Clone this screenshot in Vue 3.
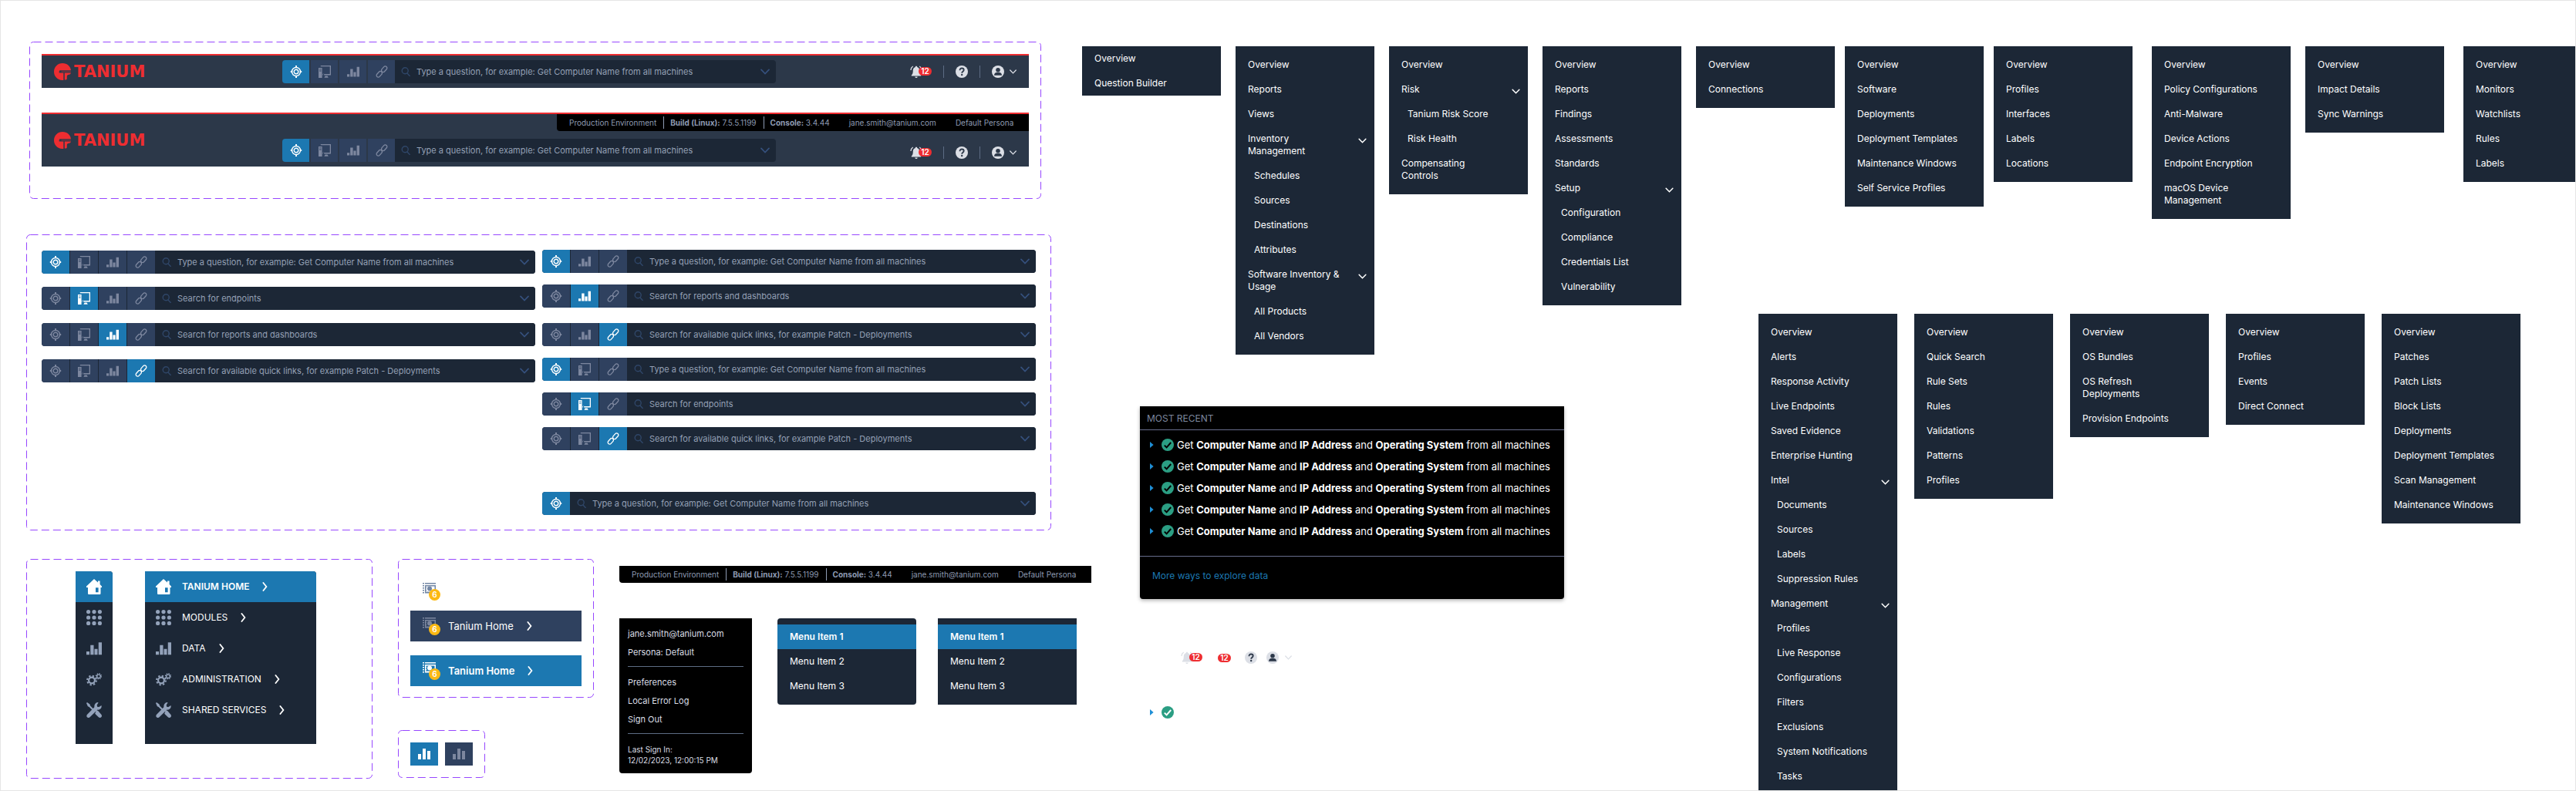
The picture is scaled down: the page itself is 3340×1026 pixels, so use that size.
<script setup>
const prompts = {
  question: 'Type a question, for example: Get Computer Name from all machines',
  endpoint: 'Search for endpoints',
  reports: 'Search for reports and dashboards',
  link: 'Search for available quick links, for example Patch - Deployments'
}
const modeNames = { question: 'Ask a question', endpoint: 'Endpoints', reports: 'Reports', link: 'Quick links' }

const all = ['question', 'endpoint', 'reports', 'link']
const noEndpoint = ['question', 'reports', 'link']
const noReports = ['question', 'endpoint', 'link']

const headers = [
  { id: 'compact', env: false },
  { id: 'tall', env: true }
]
const fullBars = all.map((active) => ({ modes: all, active }))
const partialBars = [
  { modes: noEndpoint, active: 'question', gap: '' },
  { modes: noEndpoint, active: 'reports', gap: 'gap-s' },
  { modes: noEndpoint, active: 'link', gap: 'gap-m' },
  { modes: noReports, active: 'question', gap: 'gap-s' },
  { modes: noReports, active: 'endpoint', gap: 'gap-s' },
  { modes: noReports, active: 'link', gap: 'gap-s' },
  { modes: ['question'], active: 'question', gap: 'gap-l' }
]

const nav = [
  { icon: 'home', label: 'TANIUM HOME' },
  { icon: 'grid', label: 'MODULES' },
  { icon: 'reports', label: 'DATA' },
  { icon: 'gears', label: 'ADMINISTRATION' },
  { icon: 'tools', label: 'SHARED SERVICES' }
]

// Leading ">" marks a nested entry, trailing "v" marks an expandable group.
const item = (s) => ({
  label: s.replace(/^>/, '').replace(/ v$/, ''),
  sub: s.startsWith('>'),
  group: s.endsWith(' v')
})
const menu = (gap, ...labels) => ({ gap, items: labels.map(item) })

const menusA = [
  menu('flush', 'Overview', 'Question Builder'),
  menu('', 'Overview', 'Reports', 'Views', 'Inventory\nManagement v', '>Schedules', '>Sources', '>Destinations', '>Attributes', 'Software Inventory &\nUsage v', '>All Products', '>All Vendors'),
  menu('', 'Overview', 'Risk v', '>Tanium Risk Score', '>Risk Health', 'Compensating\nControls'),
  menu('', 'Overview', 'Reports', 'Findings', 'Assessments', 'Standards', 'Setup v', '>Configuration', '>Compliance', '>Credentials List', '>Vulnerability')
]
const menusB = [
  menu('', 'Overview', 'Connections'),
  menu('near', 'Overview', 'Software', 'Deployments', 'Deployment Templates', 'Maintenance Windows', 'Self Service Profiles'),
  menu('near', 'Overview', 'Profiles', 'Interfaces', 'Labels', 'Locations'),
  menu('far', 'Overview', 'Policy Configurations', 'Anti-Malware', 'Device Actions', 'Endpoint Encryption', 'macOS Device\nManagement'),
  menu('', 'Overview', 'Impact Details', 'Sync Warnings'),
  menu('far', 'Overview', 'Monitors', 'Watchlists', 'Rules', 'Labels')
]
const menusC = [
  menu('full', 'Overview', 'Alerts', 'Response Activity', 'Live Endpoints', 'Saved Evidence', 'Enterprise Hunting', 'Intel v', '>Documents', '>Sources', '>Labels', '>Suppression Rules', 'Management v', '>Profiles', '>Live Response', '>Configurations', '>Filters', '>Exclusions', '>System Notifications', '>Tasks'),
  menu('', 'Overview', 'Quick Search', 'Rule Sets', 'Rules', 'Validations', 'Patterns', 'Profiles'),
  menu('', 'Overview', 'OS Bundles', 'OS Refresh\nDeployments', 'Provision Endpoints'),
  menu('', 'Overview', 'Profiles', 'Events', 'Direct Connect'),
  menu('', 'Overview', 'Patches', 'Patch Lists', 'Block Lists', 'Deployments', 'Deployment Templates', 'Scan Management', 'Maintenance Windows')
]
</script>

<template>
  <svg class="defs" aria-hidden="true">
    <symbol id="i-question" viewBox="0 0 16 16">
      <g fill="none" stroke="currentColor">
        <circle cx="8" cy="8" r="5.5" stroke-width="1.4" />
        <circle cx="8" cy="8" r="2.8" stroke-width="1.4" />
        <path d="M8 0v3M8 13v3M0.8 8h2.4M12.800 8h2.4" stroke-width="2" />
      </g>
    </symbol>
    <symbol id="i-endpoint" viewBox="0 0 16 16">
      <path fill="currentColor" fill-rule="evenodd" d="M0 3h4.6v13H0zM1 4.4v.9h2.6v-.9zM1 6.6v.9h2.6v-.9zM2.8 0H16v12.6H6V11h8.7V1.3H2.8zM8.6 13.5h3l1.2 2.2H7.4zM5.4 10.8h1.8v1.8H5.4z" />
    </symbol>
    <symbol id="i-reports" viewBox="0 0 16 16">
      <path fill="currentColor" d="M0 11.2h3.2V14.5H0zM4.2 4.5h3.4v10H4.2zM8.4 8.6h3.2v5.9H8.4zM12.6 1.8H16v12.7h-3.4z" />
    </symbol>
    <symbol id="i-link" viewBox="0 0 16 16">
      <g fill="none" stroke="currentColor" stroke-width="1.3" stroke-linecap="round">
        <rect x="-2.3" y="-4.3" width="4.6" height="8.6" rx="2.3" transform="translate(11.2 4.7) rotate(42)" />
        <rect x="-2.3" y="-4.3" width="4.6" height="8.6" rx="2.3" transform="translate(4.8 11.3) rotate(42)" />
      </g>
    </symbol>
    <symbol id="i-search" viewBox="0 0 12 12">
      <g fill="none" stroke="currentColor" stroke-width="1.4" stroke-linecap="round">
        <circle cx="5.2" cy="4.8" r="4" /><path d="M8 8l3.2 3.4" />
      </g>
    </symbol>
    <symbol id="i-down" viewBox="0 0 12 8">
      <path d="M1 1.4l5 5.2 5-5.2" fill="none" stroke="currentColor" stroke-width="1.7" stroke-linecap="round" />
    </symbol>
    <symbol id="i-right" viewBox="0 0 8 12">
      <path d="M1.4 1l4 5-4 5" fill="none" stroke="currentColor" stroke-width="1.8" stroke-linecap="round" />
    </symbol>
    <symbol id="i-bell" viewBox="0 0 16 16">
      <path fill="currentColor" d="M8 .8c.8 0 1.2.5 1.2 1.1 2.2.6 3 2.5 3 4.7 0 3.2.6 4.8 2 5.9v1.1H1.8v-1.1c1.4-1.1 2-2.7 2-5.9 0-2.2.8-4.100 3-4.700C6.800 1.300 7.200.8 8 .8zM6.300 14.400h3.400c-.2 1-.8 1.600-1.700 1.600s-1.500-.6-1.700-1.600z" />
      <path fill="none" stroke="currentColor" stroke-width="1.2" d="M3.7 1C1.9 2.2 1 3.8.9 6M12.3 1c1.8 1.2 2.7 2.8 2.8 5" />
    </symbol>
    <symbol id="i-help" viewBox="0 0 16 16">
      <circle cx="8" cy="8" r="8" fill="#dcdfe6" />
      <path d="M5.500 6.200c0-1.700 1.100-2.700 2.600-2.700s2.600 1 2.600 2.300c0 2-2.500 1.900-2.500 3.900" fill="none" stroke="#2c3849" stroke-width="1.8" />
      <circle cx="8.2" cy="12" r="1.2" fill="#2c3849" />
    </symbol>
    <symbol id="i-user" viewBox="0 0 16 16">
      <circle cx="8" cy="8" r="8" fill="#dcdfe6" />
      <circle cx="8" cy="5.8" r="2.8" fill="#2c3849" />
      <path d="M3 12.800c0-2.400 1.400-3.600 3.200-3.800h3.600c1.800.2 3.200 1.400 3.200 3.800z" fill="#2c3849" />
    </symbol>
    <symbol id="i-home" viewBox="0 0 20 20">
      <path fill="currentColor" fill-rule="evenodd" d="M10 0l5 4.600V2.400h2.600V7L20 9.400V11h-1.500v7.500c0 1-.5 1.500-1.500 1.500H3.500c-1 0-1.500-.5-1.500-1.500V11H0V9.400zM12 11.300v6h3.600v-6z" />
    </symbol>
    <symbol id="i-grid" viewBox="0 0 20 20">
      <g fill="currentColor">
        <circle cx="2.6" cy="2.6" r="2.6" /><circle cx="10" cy="2.6" r="2.6" /><circle cx="17.4" cy="2.6" r="2.6" />
        <circle cx="2.6" cy="10" r="2.6" /><circle cx="10" cy="10" r="2.6" /><circle cx="17.4" cy="10" r="2.6" />
        <circle cx="2.6" cy="17.4" r="2.6" /><circle cx="10" cy="17.4" r="2.6" /><circle cx="17.4" cy="17.4" r="2.6" />
      </g>
    </symbol>
    <symbol id="i-gears" viewBox="0 0 20 20">
      <g fill="none" stroke="currentColor">
        <circle cx="7" cy="11.5" r="3.9" stroke-width="2.2" />
        <circle cx="7" cy="11.5" r="5.9" stroke-width="2" stroke-dasharray="2.3 2.34" />
        <circle cx="16" cy="6.2" r="2.3" stroke-width="1.4" />
        <circle cx="16" cy="6.2" r="3.5" stroke-width="1.3" stroke-dasharray="1.37 1.38" />
      </g>
    </symbol>
    <symbol id="i-tools" viewBox="0 0 20 20">
      <path fill="currentColor" d="M14.600 0l1 .2-1.900 3.200.4 2.300 2.300.4L19.500 4c.9 3.300-1.700 6.200-5 5.600L4.500 19.300c-1 1-2.700.9-3.500 0-.9-.9-.9-2.500.1-3.500l9.300-9.500C9.900 3 11.800.2 14.600 0zM0 .9L1 0l3.500 2.400.6 2.100 4 4-1.500 1.500-4-4L1.900 5.300zM12.800 10.800c.8-.4 1.900-.3 2.600.4l3.900 4.600c.9 1 .9 2.600 0 3.500s-2.500.9-3.500 0l-4.600-4.600z" />
    </symbol>
    <symbol id="i-module" viewBox="0 0 17 16">
      <path fill="currentColor" fill-rule="evenodd" d="M3 0h14v1.5H3zM0 0h2v1.5H0zM0 3h2v1.5H0zM0 6h2v1.5H0zM0 9h2v1.5H0zM0 12h2v1.5H0zM3 3h14v10.5H3zM4.500 4.500v7.500h11V4.500z" />
      <circle cx="9" cy="7.5" r="3" fill="currentColor" />
      <path fill="currentColor" d="M3 6h2v1H3zM3 9h2v1H3zM5 11.500h8V13H5z" />
    </symbol>
    <symbol id="i-chart" viewBox="0 0 16 14">
      <path fill="currentColor" d="M0 7h4v7H0zM6 0h4v14H6zM12 3h4v11h-4z" />
    </symbol>
    <symbol id="i-play" viewBox="0 0 5 8"><path d="M0 0l4.600 4L0 8z" fill="#1f8fd6" /></symbol>
    <symbol id="i-check" viewBox="0 0 16 16">
      <circle cx="8" cy="8" r="8" fill="#2b9e83" />
      <path d="M3.800 8.600l2.800 2.800 5.600-6.400" fill="none" stroke="currentColor" stroke-width="2" />
    </symbol>
    <symbol id="i-logo" viewBox="0 0 22 22">
      <path fill="#ee2d31" d="M11 0C17.200 0 21.600 4.300 22 9.200H8.200c-1 0-1.500.6-1.500 1.500v1.900h5.600V22C5 22.400 0 17.300 0 11 0 4.900 4.900 0 11 0zM13.800 12.600H22c-.6 1.800-1.200 2.200-2.400 2.200-2 0-2.800 1-2.800 2.600v3.200l-1 .8h-2z" />
      <path fill="#ee2d31" d="M9.500 10.500H22v.9H9.500z" opacity=".6" />
    </symbol>
  </svg>

  <main class="sheet">
    <div class="west">
      <section class="frame headers" aria-label="Headers">
        <svg class="dash" aria-hidden="true"><rect rx="5" /></svg>
        <header v-for="h in headers" :key="h.id" class="topbar" :class="h.id">
          <a class="logo" href="#" aria-label="Tanium">
            <svg width="22" height="22"><use href="#i-logo" /></svg><span>TANIUM</span>
          </a>
          <div v-if="h.env" class="env">
            <span class="env-cell">Production Environment</span>
            <span class="env-cell ruled"><b>Build (Linux):</b> 7.5.5.1199</span>
            <span class="env-cell ruled"><b>Console:</b> 3.4.44</span>
            <span class="env-cell mail">jane.smith@tanium.com</span>
            <span class="env-cell">Default Persona</span>
          </div>
          <form class="search split" @submit.prevent>
            <button v-for="m in all" :key="m" type="button" class="tab" :class="{ on: m === 'question' }" :aria-label="modeNames[m]">
              <svg width="16" height="16"><use :href="`#i-${m}`" /></svg>
            </button>
            <div class="field">
              <svg class="glass" width="12" height="12"><use href="#i-search" /></svg>
              <input type="text" :placeholder="prompts.question" aria-label="Question" />
              <button type="button" class="open" aria-label="Show history"><svg width="12" height="8"><use href="#i-down" /></svg></button>
            </div>
          </form>
          <div class="tools">
            <button type="button" class="bell" aria-label="Notifications">
              <svg width="16" height="16"><use href="#i-bell" /></svg><span class="count">12</span>
            </button>
            <i class="rule"></i>
            <button type="button" aria-label="Help"><svg width="16" height="16"><use href="#i-help" /></svg></button>
            <i class="rule"></i>
            <button type="button" class="account" aria-label="Account">
              <svg width="16" height="16"><use href="#i-user" /></svg><svg width="9" height="6"><use href="#i-down" /></svg>
            </button>
          </div>
        </header>
      </section>

      <section class="frame bars" aria-label="Search bars">
        <svg class="dash" aria-hidden="true"><rect rx="5" /></svg>
        <div v-for="(col, c) in [fullBars, partialBars]" :key="c" class="bar-col" :class="{ even: c === 0 }">
          <form v-for="(bar, i) in col" :key="i" class="search" :class="bar.gap" @submit.prevent>
            <button v-for="m in bar.modes" :key="m" type="button" class="tab" :class="{ on: m === bar.active }" :aria-label="modeNames[m]">
              <svg width="16" height="16"><use :href="`#i-${m}`" /></svg>
            </button>
            <div class="field">
              <svg class="glass" width="12" height="12"><use href="#i-search" /></svg>
              <input type="text" :placeholder="prompts[bar.active]" :aria-label="modeNames[bar.active]" />
              <button type="button" class="open" aria-label="Show history"><svg width="12" height="8"><use href="#i-down" /></svg></button>
            </div>
          </form>
        </div>
      </section>

      <div class="lower">
        <section class="frame navs" aria-label="Navigation">
          <svg class="dash" aria-hidden="true"><rect rx="5" /></svg>
          <nav class="side slim">
            <a v-for="(n, i) in nav" :key="n.icon" href="#" :class="{ on: i === 0 }" :aria-label="n.label">
              <svg width="20" height="20"><use :href="`#i-${n.icon}`" /></svg>
            </a>
          </nav>
          <nav class="side wide">
            <a v-for="(n, i) in nav" :key="n.icon" href="#" :class="{ on: i === 0 }">
              <svg width="20" height="20"><use :href="`#i-${n.icon}`" /></svg>
              <span>{{ n.label }}</span>
              <svg class="go" width="8" height="12"><use href="#i-right" /></svg>
            </a>
          </nav>
        </section>

        <div class="stack">
          <section class="frame rows" aria-label="Navigation items">
            <svg class="dash" aria-hidden="true"><rect rx="5" /></svg>
            <div class="row bare">
              <span class="mod"><svg width="17" height="16"><use href="#i-module" /></svg><span class="six">6</span></span>
            </div>
            <a v-for="s in ['rest', 'on']" :key="s" class="row" :class="s" href="#">
              <span class="mod"><svg width="17" height="16"><use href="#i-module" /></svg><span class="six">6</span></span>
              <span>Tanium Home</span>
              <svg width="8" height="12"><use href="#i-right" /></svg>
            </a>
          </section>
          <section class="frame toggles" aria-label="Chart buttons">
            <svg class="dash" aria-hidden="true"><rect rx="5" /></svg>
            <button type="button" class="tab on" aria-label="Chart, selected"><svg width="16" height="14"><use href="#i-chart" /></svg></button>
            <button type="button" class="tab" aria-label="Chart"><svg width="16" height="14"><use href="#i-chart" /></svg></button>
          </section>
        </div>

        <div class="extras">
          <div class="env">
            <span class="env-cell">Production Environment</span>
            <span class="env-cell ruled"><b>Build (Linux):</b> 7.5.5.1199</span>
            <span class="env-cell ruled"><b>Console:</b> 3.4.44</span>
            <span class="env-cell mail">jane.smith@tanium.com</span>
            <span class="env-cell">Default Persona</span>
          </div>
          <div class="cards">
            <div class="account-menu">
              <ul><li>jane.smith@tanium.com</li><li>Persona: Default</li></ul>
              <ul><li><a href="#">Preferences</a></li><li><a href="#">Local Error Log</a></li><li><a href="#">Sign Out</a></li></ul>
              <p>Last Sign In:<br />12/02/2023, 12:00:15 PM</p>
            </div>
            <ul v-for="s in ['round', 'square']" :key="s" class="menu" :class="s">
              <li v-for="n in 3" :key="n"><a href="#" :class="{ on: n === 1 }">Menu Item {{ n }}</a></li>
            </ul>
          </div>
        </div>
      </div>
    </div>

    <div class="middle">
      <div class="menus">
        <ul v-for="(m, i) in menusA" :key="i" class="menu" :class="m.gap">
          <li v-for="(it, k) in m.items" :key="k">
            <a href="#" :class="{ sub: it.sub }">{{ it.label }}<svg v-if="it.group" class="fold" width="11" height="7"><use href="#i-down" /></svg></a>
          </li>
        </ul>
      </div>
      <section class="recent">
        <h2>MOST RECENT</h2>
        <ul>
          <li v-for="n in 5" :key="n">
            <svg width="5" height="8"><use href="#i-play" /></svg>
            <svg class="ok" width="16" height="16"><use href="#i-check" /></svg>
            <span>Get <b>Computer Name</b> and <b>IP Address</b> and <b>Operating System</b> from all machines</span>
          </li>
        </ul>
        <a class="more" href="#">More ways to explore data</a>
      </section>
      <div class="loose">
        <span class="bell"><svg width="16" height="16"><use href="#i-bell" /></svg><span class="count">12</span></span>
        <span class="count">12</span>
        <svg width="16" height="16"><use href="#i-help" /></svg>
        <svg width="16" height="16"><use href="#i-user" /></svg>
        <svg width="9" height="6"><use href="#i-down" /></svg>
      </div>
      <div class="status">
        <svg width="5" height="8"><use href="#i-play" /></svg>
        <svg class="ok" width="16" height="16"><use href="#i-check" /></svg>
      </div>
    </div>

    <div class="east">
      <div class="menus">
        <ul v-for="(m, i) in menusB" :key="i" class="menu" :class="m.gap">
          <li v-for="(it, k) in m.items" :key="k"><a href="#">{{ it.label }}</a></li>
        </ul>
      </div>
      <div class="menus second">
        <ul v-for="(m, i) in menusC" :key="i" class="menu" :class="m.gap">
          <li v-for="(it, k) in m.items" :key="k">
            <a href="#" :class="{ sub: it.sub }">{{ it.label }}<svg v-if="it.group" class="fold" width="11" height="7"><use href="#i-down" /></svg></a>
          </li>
        </ul>
      </div>
    </div>
  </main>
</template>

<style>
body { background: #fff; }
</style>

<style scoped>
* { box-sizing: border-box; }
ul, h2, p { margin: 0; padding: 0; list-style: none; font-weight: 400; }
a { color: inherit; text-decoration: none; }
button { margin: 0; padding: 0; border: 0; background: none; color: inherit; font: inherit; cursor: pointer; }
svg { display: block; flex: none; }
b { font-weight: 700; }
.defs { position: absolute; width: 0; height: 0; }

.sheet {
  display: grid;
  grid-template-columns: minmax(0, 1369fr) minmax(0, 777fr) minmax(0, 1159fr);
  min-height: 100vh;
  padding-left: 33px;
  border: 1px solid #e5e5e5;
  overflow-x: clip;
  font-family: Inter, "Liberation Sans", sans-serif;
  font-size: 12px;
  line-height: 16px;
  color: #fff;
}

.frame { position: relative; }
.dash { position: absolute; inset: 0; width: 100%; height: 100%; pointer-events: none; }
.dash rect { x: 0.5px; y: 0.5px; width: calc(100% - 1px); height: calc(100% - 1px); fill: none; stroke: #9747ff; stroke-width: 1; stroke-dasharray: 10 5; }

/* west */
.west { padding-top: 53px; }
.headers { display: grid; gap: 32px; margin: 0 53px 46px 4px; padding: 16px 16px 42px; }
.topbar {
  display: grid;
  grid-template-columns: 296fr 640fr 312fr;
  padding: 0 16px;
  border-top: 2px solid #ee2d31;
  background: #2c3849;
}
.topbar.compact { grid-template-rows: 42px; align-items: center; }
.topbar.tall { grid-template-rows: 22px 46px; }
.logo { display: flex; align-items: center; gap: 4px; }
.logo span { color: #ee2d31; font: 700 21px/22px "DejaVu Sans", sans-serif; }
.tall .logo { grid-row: 1 / -1; }
.tall .env { grid-column: 2 / -1; justify-self: end; margin-right: -16px; }
.tall .search, .tall .tools { align-self: end; }
.tall .search { grid-column: 2; margin-bottom: 6px; }
.tall .tools { margin-bottom: 10px; }

.search { display: flex; gap: 1px; height: 30px; border-radius: 4px; background: #1c2736; overflow: hidden; }
.search.split { gap: 2px; background: none; }
.tab { display: grid; place-items: center; flex: none; width: 36px; height: 30px; background: #2f415f; color: #7d879f; }
.split .tab { width: 35px; }
.tab.on { background: #1c78b1; color: #fff; }
.field { display: flex; flex: 1; align-items: center; min-width: 0; padding: 0 8px; background: #1c2736; color: #35507c; }
.split .field { margin-left: -2px; }
.glass { margin-right: 8px; color: #2f4668; }
.field input { flex: 1; min-width: 0; height: 30px; padding: 0; border: 0; outline: 0; background: none; color: #94a0b5; font: 11px/16px Inter, "Liberation Sans", sans-serif; }
.field input::placeholder { color: #94a0b5; opacity: 1; }

.tools { display: flex; align-items: center; justify-content: flex-end; gap: 15px; color: #dcdfe6; }
.rule { width: 1px; height: 16px; background: #5d6c84; }
.bell { position: relative; width: 28px; height: 16px; }
.bell .count { position: absolute; top: 2px; right: 0; }
.count { width: 17px; height: 11px; border-radius: 6px; background: #ee2d31; color: #fff; font-size: 10px; font-weight: 600; line-height: 11px; text-align: center; }
.account { display: flex; align-items: center; gap: 7px; }

.env { display: flex; align-items: center; width: 612px; height: 22px; padding: 0 16px; border-bottom-left-radius: 4px; background: #000; color: #8e9bb3; font-size: 10px; white-space: nowrap; }
.env-cell.ruled { margin-left: 9px; padding-left: 8px; border-left: 1px solid #8e9bb3; }
.env-cell.mail { margin: 0 25px; }

.bars { display: grid; grid-template-columns: 1fr 1fr; gap: 9px; margin-right: 40px; padding: 20px; }
.bar-col.even { display: grid; align-content: start; gap: 17px; padding-top: 1px; }
.gap-s { margin-top: 15px; }
.gap-m { margin-top: 20px; }
.gap-l { margin-top: 54px; }

.lower { display: flex; align-items: flex-start; gap: 33px; margin-top: 37px; }
.lower > * { flex: none; }
.navs { display: flex; gap: 42px; width: 449px; padding: 16px 0 45px 64px; }
.side { padding-bottom: 24px; border-top-right-radius: 4px; background: #1c2736; overflow: hidden; }
.side a { display: flex; align-items: center; gap: 14px; height: 40px; padding: 0 14px; }
.side a > svg:first-child { color: #93a2ba; }
.side .on, .side .on > svg:first-child { background: #1c78b1; color: #fff; font-weight: 600; }
.slim { width: 48px; }
.wide { width: 222px; }
.go { margin-left: 3px; }

.stack { display: grid; justify-items: start; gap: 42px; }
.rows { display: grid; width: 254px; padding: 16px 16px 15px; }
.row { display: flex; align-items: center; height: 40px; padding-left: 16px; font-size: 13px; }
.row > span:nth-child(2) { margin: 0 17px 0 9px; }
.row.bare { height: 51px; color: #7387a5; }
.row.rest { background: #2f415f; }
.row.rest .mod > svg { color: #7d879f; }
.row.on { margin-top: 18px; background: #1c78b1; font-weight: 600; }
.mod { position: relative; width: 24px; height: 24px; padding-top: 1px; }
.six { position: absolute; right: 1px; bottom: 0; width: 15px; height: 15px; border-radius: 50%; background: #fcb913; color: #fff; font-size: 10px; font-weight: 600; line-height: 15px; text-align: center; }
.toggles { display: flex; gap: 9px; padding: 16px; }

.extras { padding-top: 9px; }
.cards { display: flex; align-items: flex-start; gap: 28px; margin-top: 46px; }
.account-menu { width: 172px; margin-right: 5px; padding: 8px 11px 10px; border-radius: 0 0 4px 4px; background: #000; color: #dcdfe6; font-size: 11px; }
.account-menu ul { padding: 0 0 6px; border-bottom: 1px solid #5d6c84; }
.account-menu ul + ul { padding-top: 8px; }
.account-menu li { line-height: 24px; }
.account-menu p { padding-top: 13px; font-size: 10px; line-height: 14px; }

/* menus */
.menus { display: flex; align-items: flex-start; gap: 19px; }
.menu { flex: none; width: 180px; padding: 8px 0; background: #1c2736; }
.menu.round { border-radius: 4px; }
.menu.flush { padding: 0; }
.menu.near { margin-left: -6px; }
.menu.far { margin-left: 6px; }
.menu.full { align-self: stretch; }
.menu a { display: flex; justify-content: space-between; padding: 8px 10px 8px 16px; white-space: pre-line; }
.menu a.sub { padding-left: 24px; }
.menu a.on { background: #1c78b1; font-weight: 600; }
.fold { margin-top: 7px; }

/* middle */
.middle { padding-top: 59px; }
.recent { width: 550px; margin: 67px 0 0 75px; border-radius: 0 0 4px 4px; background: #000; box-shadow: 0 2px 5px rgba(0, 0, 0, 0.3); }
.recent h2 { padding: 8px 9px 6px; border-bottom: 1px solid #676c8c; color: #7d879f; font-size: 12px; }
.recent ul { padding: 5px 13px 18px; border-bottom: 1px solid #676c8c; }
.recent li, .status { display: flex; align-items: center; height: 28px; font-size: 13px; white-space: nowrap; }
.recent li span { margin-left: 4px; }
.recent .ok { color: #000; }
.ok { margin-left: 10px; }
.more { display: block; padding: 17px 16px 22px; color: #1c78b1; }
.loose { display: flex; align-items: center; margin: 68px 0 0 128px; color: #dcdfe6; }
.loose .count + svg { margin: 0 12px 0 18px; }
.loose .bell svg { margin: 0; }
.loose > .count { margin-left: 20px; }
.loose svg:last-child { margin-left: 8px; }
.status { margin: 49px 0 0 88px; }

/* east */
.east { display: flex; flex-direction: column; padding: 59px 0 0 19px; }
.second { flex: 1; gap: 22px; margin: 123px 0 0 81px; }
.second .full { padding-bottom: 0; }
</style>
